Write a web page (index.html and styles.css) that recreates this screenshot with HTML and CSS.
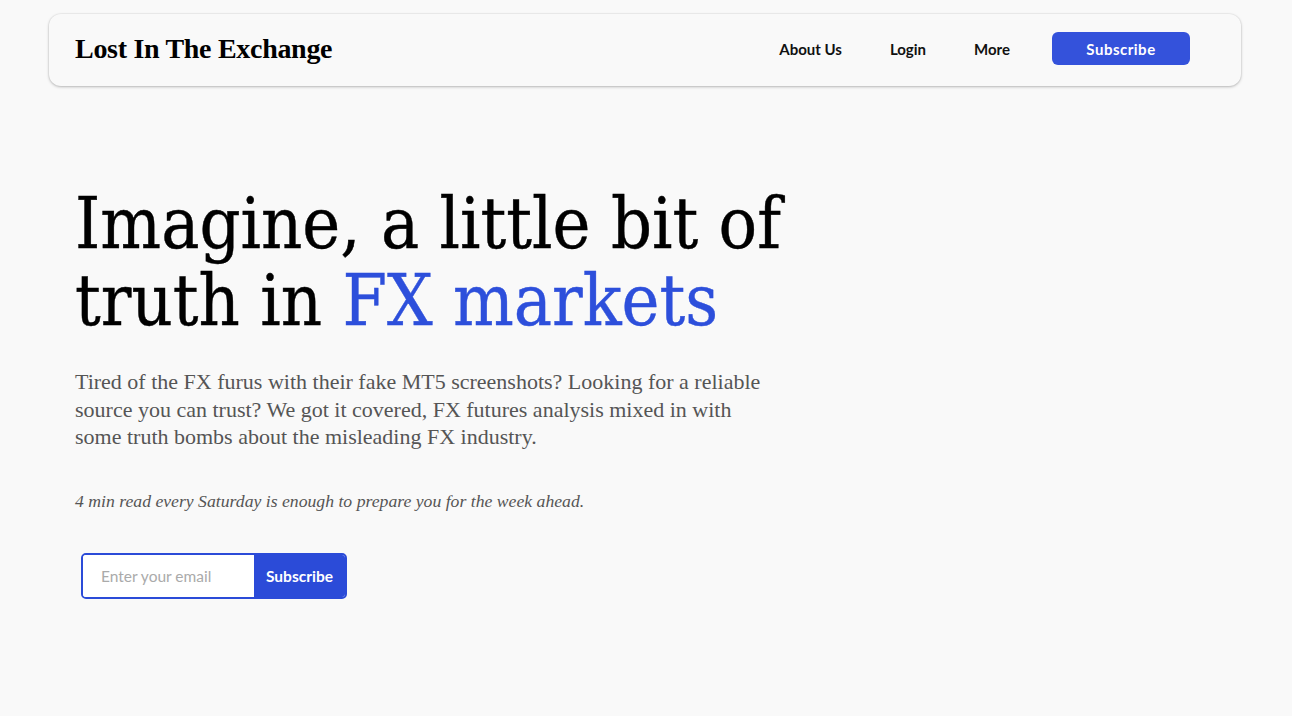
FILE: index.html
```html
<!DOCTYPE html>
<html lang="en">
<head>
<meta charset="utf-8">
<title>Lost In The Exchange</title>
<link rel="stylesheet" href="styles.css">
</head>
<body>
<header class="site-header">
  <div class="logo">Lost In The Exchange</div>
  <nav class="nav">
    <a class="nav-link" href="#">About Us</a>
    <a class="nav-link" href="#">Login</a>
    <a class="nav-link" href="#">More</a>
    <a class="nav-btn" href="#">Subscribe</a>
  </nav>
</header>
<main class="hero">
  <h1 class="hero-title">Imagine, a little bit of<br>truth in <span class="accent">FX markets</span></h1>
  <p class="hero-text">Tired of the FX furus with their fake MT5 screenshots? Looking for a reliable source you can trust? We got it covered, FX futures analysis mixed in with some truth bombs about the misleading FX industry.</p>
  <p class="hero-note">4 min read every Saturday is enough to prepare you for the week ahead.</p>
  <form class="signup">
    <input class="signup-input" type="email" placeholder="Enter your email">
    <button class="signup-btn" type="button">Subscribe</button>
  </form>
</main>
</body>
</html>
```
FILE: styles.css
```css
* { box-sizing: border-box; }
html, body { margin: 0; padding: 0; }
body {
  background: #f9f9f9;
  font-family: "Liberation Serif", serif;
  color: #000;
  padding: 14px 51px 0 49px;
}
.site-header {
  height: 72px;
  background: #f9f9f9;
  border-radius: 12px;
  box-shadow: 0 1px 3px rgba(0,0,0,0.25), 0 0 0 1px rgba(0,0,0,0.03);
  display: flex;
  align-items: center;
  justify-content: space-between;
  padding: 0 51px 0 26px;
}
.logo {
  font-family: "Liberation Serif", serif;
  font-weight: 700;
  font-size: 28px;
  letter-spacing: -0.3px;
  color: #000;
  margin-top: -3px;
}
.nav { display: flex; align-items: center; margin-top: -3px; }
.nav-link {
  font-family: "Lato", sans-serif;
  font-weight: 700;
  font-size: 15px;
  color: #111;
  text-decoration: none;
  margin-right: 48px;
}
.nav-btn {
  display: flex;
  align-items: center;
  justify-content: center;
  width: 138px;
  height: 33px;
  margin-left: -6px;
  background: #3452db;
  color: #fff;
  border-radius: 6px;
  font-family: "Lato", sans-serif;
  font-weight: 700;
  font-size: 15px;
  letter-spacing: 0.5px;
  text-decoration: none;
}
.hero { padding: 99px 0 0 26px; }
.hero-title {
  margin: 0;
  font-family: "DejaVu Serif", serif;
  font-stretch: condensed;
  font-weight: 400;
  font-size: 71.3px;
  line-height: 77px;
  color: #000;
  -webkit-text-stroke: 0.4px currentColor;
}
.accent { color: #2d4fdb; }
.hero-text {
  margin: 29px 0 0;
  width: 696px;
  font-family: "Liberation Serif", serif;
  font-size: 22px;
  line-height: 27.5px;
  color: #555;
}
.hero-note {
  margin: 40px 0 0;
  font-family: "Liberation Serif", serif;
  font-style: italic;
  font-size: 17.7px;
  color: #555;
}
.signup {
  display: flex;
  margin: 41px 0 0 6px;
  width: 266px;
  height: 46px;
  border: 2px solid #2b4bd8;
  border-radius: 5px;
  overflow: hidden;
}
.signup-input {
  width: 171px;
  flex: none;
  border: none;
  outline: none;
  background: #fff;
  padding: 0 0 0 18px;
  font-family: "Lato", sans-serif;
  font-size: 15.5px;
  color: #333;
}
.signup-input::placeholder { color: #aaa; }
.signup-btn {
  width: 91px;
  flex: none;
  border: none;
  background: #2b4bd8;
  color: #fff;
  font-family: "Lato", sans-serif;
  font-weight: 700;
  font-size: 15.5px;
  padding: 0;
}
```
